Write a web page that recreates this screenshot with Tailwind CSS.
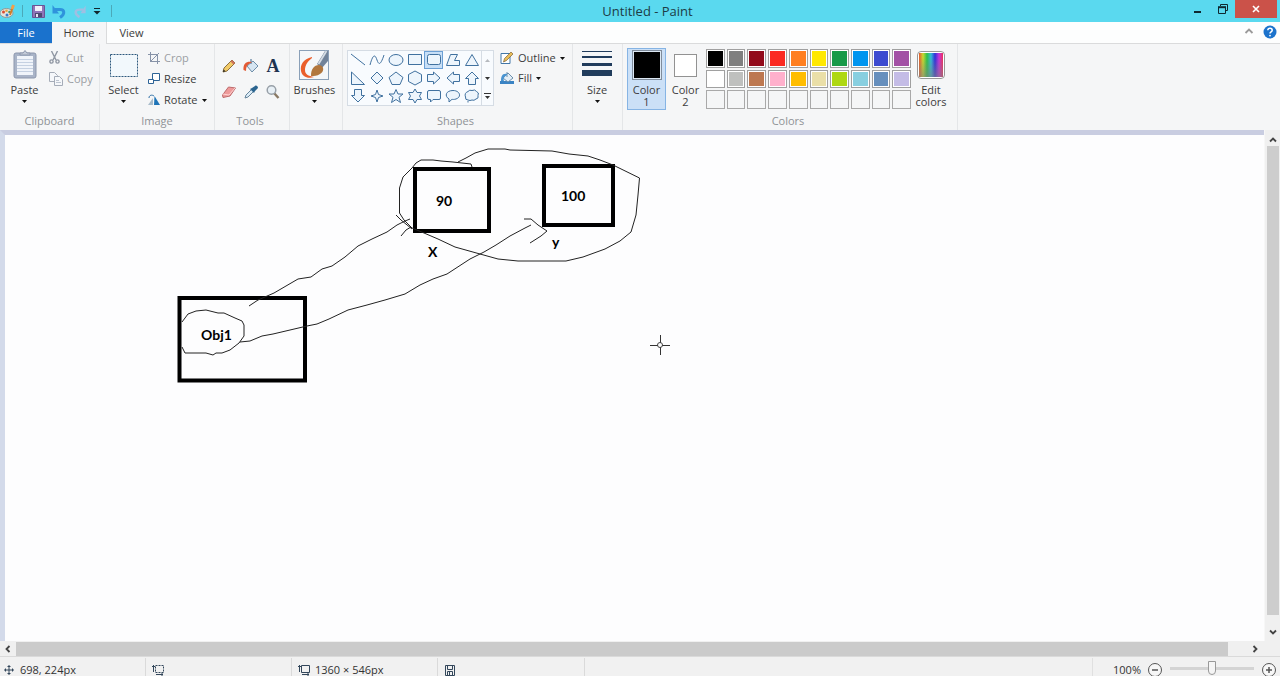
<!DOCTYPE html>
<html lang="en">
<head>
<meta charset="utf-8">
<title>Untitled - Paint</title>
<script src="https://cdn.jsdelivr.net/npm/@tailwindcss/browser@4"></script>
</head>
<body class="h-screen flex flex-col overflow-hidden bg-[#f5f6f7] font-['Open_Sans','Noto_Sans',sans-serif] text-[11px] leading-3 text-[#3c3c3c]">

<header class="h-[22px] shrink-0 flex items-start bg-[#5ad9ef] text-[#1d3c46]">
  <div class="w-32 h-full flex items-center">
    <svg class="w-4 h-4" viewBox="0 0 16 16" aria-hidden="true"><ellipse cx="6.500" cy="10" rx="6.500" ry="4.500" fill="#e3e4dd" stroke="#8d9a98"/><circle cx="3.500" cy="9" r="1.500" fill="#d94b32"/><circle cx="6.500" cy="7.800" r="1.300" fill="#e9a33c"/><circle cx="9.500" cy="9" r="1.300" fill="#3c9b72"/><circle cx="7" cy="12" r="1.500" fill="#3676c9"/><path d="m10 12 2.500-7" stroke="#d27c28" stroke-width="2"/><path d="m12 6 1.500-4" stroke="#f2a04a" stroke-width="3"/></svg>
    <span class="w-px h-3 ml-1.5 bg-[#4ba9b9]"></span>
    <button aria-label="Save" class="ml-2"><svg class="w-[15px] h-[15px]" viewBox="0 0 15 15"><path d="M1.500 1.500h12v12h-12z" fill="#8f74b8" stroke="#6a5595"/><path d="M4 2h7v5H4z" fill="#f2f0fa"/><path d="M4 9h7v4H4z" fill="#4d4a72"/><path d="M5 10h2v3H5z" fill="#e5e3f0"/></svg></button>
    <button aria-label="Undo" class="ml-1.5"><svg class="w-[15px] h-[15px]" viewBox="0 0 15 15"><path d="M3 5.500h5c4.500 0 5.500 4.500 0 8" fill="none" stroke="#2f93dc" stroke-width="3"/><path d="M.5 1v8.500H7z" fill="#2f93dc"/></svg></button>
    <button aria-label="Redo" class="ml-1.5"><svg class="w-[14px] h-[15px]" viewBox="0 0 15 15"><path d="M11 5.500H7c-5 0-6 4.500 0 8" fill="none" stroke="#9fbfe2" stroke-width="2.600"/><path d="M13.500 1v8.500H8z" fill="#9fbfe2"/></svg></button>
    <button aria-label="Customize Quick Access Toolbar" class="ml-1.5"><svg class="w-2 h-2" viewBox="0 0 8 8"><path d="M1 1.500h6" stroke="#10262d"/><path d="M.500 4h7L4 7.500z" fill="#10262d"/></svg></button>
    <span class="w-px h-3 ml-2.5 bg-[#4ba9b9]"></span>
  </div>
  <h1 class="flex-1 self-center text-center text-[13px] leading-4 pr-5">Untitled - Paint</h1>
  <div class="flex items-start">
    <button aria-label="Minimize" class="w-6 h-[18px] grid place-items-center"><svg class="w-3 h-3" viewBox="0 0 12 12"><path d="M1 9h7" stroke="#0e2830" stroke-width="2"/></svg></button>
    <button aria-label="Restore" class="w-6 h-[18px] grid place-items-center"><svg class="w-3 h-3" viewBox="0 0 12 12" fill="none" stroke="#0e2830"><path d="M3.500 3V1.500h7v6H9"/><path d="M1.500 4v6.500h7V4"/><path d="M1 4.200h8" stroke-width="2"/></svg></button>
    <button aria-label="Close" class="w-[42px] h-[18px] mr-[3px] grid place-items-center bg-[#cb5249]"><svg class="w-3 h-3" viewBox="0 0 12 12"><path d="m3 3 6 6m0-6L3 9" stroke="#fff" stroke-width="1.600"/></svg></button>
  </div>
</header>

<nav class="h-[22px] shrink-0 flex items-stretch bg-[#fdfefe] border-b border-[#dadbdc]" aria-label="Ribbon tabs">
  <button class="w-[52px] bg-[#1a72cd] text-white">File</button>
  <button class="w-[55px] -mb-px bg-[#f5f6f7] border-r border-[#dadbdc]">Home</button>
  <button class="w-[49px]">View</button>
  <span class="flex-1"></span>
  <button aria-label="Minimize the Ribbon" class="mr-2 -mt-1"><svg class="w-3 h-3" viewBox="0 0 12 12"><path d="m2.500 8 3.500-3.500L9.500 8" fill="none" stroke="#9a9a9a" stroke-width="1.800"/></svg></button>
  <button aria-label="Help" class="mr-[3px] -mt-px"><svg class="w-[14px] h-[14px]" viewBox="0 0 14 14"><circle cx="7" cy="7" r="6.500" fill="#1c73cc"/><path d="M4.800 5.200c.2-2.600 4.400-2.400 4.400 0C9.200 6.800 7 6.800 7 8.500" fill="none" stroke="#fff" stroke-width="1.500"/><circle cx="7" cy="10.600" r=".9" fill="#fff"/></svg></button>
</nav>

<section class="h-[86px] shrink-0 flex bg-[#f5f6f7]" aria-label="Home ribbon">
  <div class="w-[100px] flex flex-col justify-between border-r border-[#e4e6e8] pb-[3px]">
    <div class="flex pt-[6px]">
      <button class="w-[49px] flex flex-col items-center">
        <svg class="w-6 h-[30px]" viewBox="0 0 24 30"><rect x="1" y="3" width="22" height="25" rx="2" fill="#a9b4c8" stroke="#8c97ad"/><path d="M4 6h16v19H4z" fill="#f0f4fa"/><path d="M4 9.500h16M4 12.500h16M4 15.500h16M4 18.500h16M4 21.500h16" stroke="#c5d1e2"/><path d="M7 5V3h3l2-2.500L14 3h3v2z" fill="#c2c9d6" stroke="#8c97ad"/></svg>
        <span class="mt-[4px]">Paste</span>
        <svg class="w-[5px] h-[3px] mt-1" viewBox="0 0 5 3"><path d="M0 0h5L2.500 3z" fill="#111"/></svg>
      </button>
      <div class="flex flex-col gap-2 pt-px text-[#9b9ea3]">
        <button class="flex items-center gap-1.5"><svg class="w-[11px] h-[13px]" viewBox="0 0 11 13" fill="none" stroke="#9097a3" stroke-width="1.400"><path d="M2.500 0 7 9M8.500 0 4 9"/><circle cx="2.500" cy="10.500" r="1.600"/><circle cx="8.500" cy="10.500" r="1.600"/></svg>Cut</button>
        <button class="flex items-center gap-1"><svg class="w-[14px] h-[14px]" viewBox="0 0 14 14" fill="#f5f7fa" stroke="#a5acb8"><path d="M.5.500h5l3 3v6h-8z"/><path d="M5.500 4.500h5l3 3v6h-8z"/><path d="M7 8.500h3M7 10.500h5" stroke="#bcc4d0"/></svg>Copy</button>
      </div>
    </div>
    <span class="text-center text-[#8f9296]">Clipboard</span>
  </div>

  <div class="w-[115px] flex flex-col justify-between border-r border-[#e4e6e8] pb-[3px]">
    <div class="flex pt-[6px]">
      <button class="w-[47px] flex flex-col items-center">
        <svg class="w-[30px] h-[30px]" viewBox="0 0 30 30"><rect x="1.500" y="4.500" width="27" height="22" fill="#f2f8fc" stroke="#2d587d" stroke-dasharray="2 1"/></svg>
        <span class="mt-[4px]">Select</span>
        <svg class="w-[5px] h-[3px] mt-1" viewBox="0 0 5 3"><path d="M0 0h5L2.500 3z" fill="#111"/></svg>
      </button>
      <div class="flex flex-col gap-[9px] pt-[2px] pl-px">
        <button class="flex items-center gap-1 text-[#9b9ea3]"><svg class="w-3 h-3" viewBox="0 0 12 12" fill="none" stroke="#8793a8"><path d="M2.500 0v9.500H12M0 2.500h9.500V12M2 10l9-9"/></svg>Crop</button>
        <button class="flex items-center gap-1"><svg class="w-3 h-3" viewBox="0 0 12 12" fill="#fff" stroke="#2d6396"><path d="M4.500.500h7v7h-7z"/><path d="M.5 6.500h5v4h-5z"/></svg>Resize</button>
        <button class="flex items-center gap-1"><svg class="w-3 h-3" viewBox="0 0 12 12"><path d="M0 11h5V4z" fill="#a9bccb"/><path d="M6 11h6L6.500 2z" fill="#1f74b7"/><path d="M1 4c0-3 3-3.500 5-2" fill="none" stroke="#2d6ea5"/></svg>Rotate<svg class="w-[5px] h-[3px]" viewBox="0 0 5 3"><path d="M0 0h5L2.500 3z" fill="#111"/></svg></button>
      </div>
    </div>
    <span class="text-center text-[#8f9296]">Image</span>
  </div>

  <div class="w-[75px] flex flex-col justify-between border-r border-[#e4e6e8] pb-[3px]">
    <div class="grid grid-cols-[16px_16px_16px] gap-x-1.5 gap-y-2.5 pt-[14px] pl-1.5">
      <button aria-label="Pencil"><svg class="w-4 h-4" viewBox="0 0 16 16"><path d="m2 14 1-4 8-8 3 3-8 8z" fill="#f2cb68" stroke="#8b7040"/><path d="m11 2 3 3-1.500 1.500-3-3z" fill="#cf725c"/><path d="m2 14 .7-2.500 1.800 1.800z" fill="#222"/></svg></button>
      <button aria-label="Fill with color"><svg class="w-4 h-4" viewBox="0 0 16 16"><path d="m4 8 6-5 5 5-6 6z" fill="#d6e5f1" stroke="#6d8da8"/><path d="M8 6V1" stroke="#6d8da8" stroke-width="1.400"/><path d="M9 4C4 3 0 5 .500 12l2.500 1C3 9 4 7 6 6z" fill="#e35a34"/></svg></button>
      <button aria-label="Text" class="h-4 grid place-items-center font-['Liberation_Serif',serif] font-bold text-[18px] leading-4 text-[#1e3351]">A</button>
      <button aria-label="Eraser"><svg class="w-4 h-4" viewBox="0 0 16 16"><path d="m1.500 11 6-8 7 1-5.500 8-7 1.500z" fill="#ee9a9a" stroke="#bd6a6c"/><path d="m1.500 10 6.500 1 6-7" fill="none" stroke="#ffd3d3"/></svg></button>
      <button aria-label="Color picker"><svg class="w-4 h-4" viewBox="0 0 16 16"><path d="m2 14 1-3 6-6 2 2-6 6z" fill="#dcecf7" stroke="#65849c"/><path d="m7 5 4 4 1-2 3-3c0-2-2-3-3-2L9 4z" fill="#2a648f"/></svg></button>
      <button aria-label="Magnifier"><svg class="w-4 h-4" viewBox="0 0 16 16"><path d="m9 9 4.500 5" stroke="#8a7964" stroke-width="2.400"/><circle cx="6.500" cy="6" r="4.300" fill="#e8f0f6" stroke="#98a0a8" stroke-width="1.500"/></svg></button>
    </div>
    <span class="text-center text-[#8f9296] pr-1">Tools</span>
  </div>

  <div class="w-[53px] border-r border-[#e4e6e8] pt-[6px] pr-[3px] flex flex-col items-center">
    <button class="flex flex-col items-center">
      <svg class="w-[30px] h-[30px]" viewBox="0 0 30 30"><rect x=".5" y=".5" width="29" height="29" fill="#f4f7fa" stroke="#8aa0b8"/><path d="M29 1h-3l-8 13 5 4 6-7z" fill="#71839a"/><path d="m19.500 14 8-13" stroke="#d5dde5" stroke-width="1.800"/><path d="M13 7C4 9 1 15 2 21c1 6 7 8 13 6-6-1-9-3-9-7 0-5 3-9 7-12z" fill="#ea5e2b"/><path d="M12 26c0-7 3-11 8-11 6 1 5 7 1 9-3 2-6 2-9 2z" fill="#b1773e"/></svg>
      <span class="mt-[4px]">Brushes</span>
      <svg class="w-[5px] h-[3px] mt-1" viewBox="0 0 5 3"><path d="M0 0h5L2.500 3z" fill="#111"/></svg>
    </button>
  </div>

  <div class="w-[230px] flex flex-col justify-between border-r border-[#e4e6e8] pb-[3px]">
    <div class="flex pl-1 pt-[6px]">
      <div class="flex border border-[#d5dce4] bg-[#f8fbfe]">
        <div class="grid grid-cols-[19px_19px_19px_19px_19px_19px_19px] grid-rows-[18px_18px_18px] fill-[#edf5fc] stroke-[#40719f]">
          <button aria-label="Line" class="grid place-items-center"><svg class="w-4 h-4" viewBox="0 0 16 16"><path d="m1 2 14 11"/></svg></button>
          <button aria-label="Curve" class="grid place-items-center"><svg class="w-4 h-4" viewBox="0 0 16 16"><path d="M1 13C4 2 6 2 8 8s4 4 7-5" fill="none"/></svg></button>
          <button aria-label="Oval" class="grid place-items-center"><svg class="w-4 h-4" viewBox="0 0 16 16"><ellipse cx="8" cy="8" rx="7" ry="5.500"/></svg></button>
          <button aria-label="Rectangle" class="grid place-items-center"><svg class="w-4 h-4" viewBox="0 0 16 16"><path d="M1.500 2.500h13v10h-13z"/></svg></button>
          <button aria-label="Rounded rectangle" aria-pressed="true" class="grid place-items-center bg-[#c7dff7] outline outline-[#6b9fd4] -outline-offset-1"><svg class="w-4 h-4" viewBox="0 0 16 16"><rect x="1.500" y="2.500" width="13" height="10" rx="2"/></svg></button>
          <button aria-label="Polygon" class="grid place-items-center"><svg class="w-4 h-4" viewBox="0 0 16 16"><path d="m1.500 13.500 4-11h7l-3 6h5v5z"/></svg></button>
          <button aria-label="Triangle" class="grid place-items-center"><svg class="w-4 h-4" viewBox="0 0 16 16"><path d="m8 2.500 6.500 11h-13z"/></svg></button>

          <button aria-label="Right triangle" class="grid place-items-center"><svg class="w-4 h-4" viewBox="0 0 16 16"><path d="M1.500 2v12.500h13z"/></svg></button>
          <button aria-label="Diamond" class="grid place-items-center"><svg class="w-4 h-4" viewBox="0 0 16 16"><path d="m8 2 6 6-6 6-6-6z"/></svg></button>
          <button aria-label="Pentagon" class="grid place-items-center"><svg class="w-4 h-4" viewBox="0 0 16 16"><path d="m8 2 7 5.500-3 7H4l-3-7z"/></svg></button>
          <button aria-label="Hexagon" class="grid place-items-center"><svg class="w-4 h-4" viewBox="0 0 16 16"><path d="m8 1 6.500 3.500v7L8 15l-6.500-3.500v-7z"/></svg></button>
          <button aria-label="Right arrow" class="grid place-items-center"><svg class="w-4 h-4" viewBox="0 0 16 16"><path d="M1.500 4.500h6V2l6.500 6-6.500 6v-2.500h-6z"/></svg></button>
          <button aria-label="Left arrow" class="grid place-items-center"><svg class="w-4 h-4" viewBox="0 0 16 16"><path d="M14.500 4.500h-6V2L2 8l6.500 6v-2.500h6z"/></svg></button>
          <button aria-label="Up arrow" class="grid place-items-center"><svg class="w-4 h-4" viewBox="0 0 16 16"><path d="M4.500 14.500v-6h-3L8 2l6.500 6.500h-3v6z"/></svg></button>

          <button aria-label="Down arrow" class="grid place-items-center"><svg class="w-4 h-4" viewBox="0 0 16 16"><path d="M4.500 1.500v6h-3L8 14l6.500-6.500h-3v-6z"/></svg></button>
          <button aria-label="Four-point star" class="grid place-items-center"><svg class="w-4 h-4" viewBox="0 0 16 16"><path d="m8 2 1.500 4.500L14 8 9.500 9.500 8 14 6.500 9.500 2 8l4.500-1.500z"/></svg></button>
          <button aria-label="Five-point star" class="grid place-items-center"><svg class="w-4 h-4" viewBox="0 0 16 16"><path d="m8 1.500 2 4.500h5l-4 3.300 1.500 5.200L8 11.500l-4.500 3L5 9.300 1 6h5z"/></svg></button>
          <button aria-label="Six-point star" class="grid place-items-center"><svg class="w-4 h-4" viewBox="0 0 16 16"><path d="m8 1 2 3.500h4.500L12.500 8l2 3.500H10L8 15l-2-3.500H1.500l2-3.500-2-3.500H6z"/></svg></button>
          <button aria-label="Rounded rectangular callout" class="grid place-items-center"><svg class="w-4 h-4" viewBox="0 0 16 16"><path d="M3 2.500h10q1.500 0 1.500 1.500v6q0 1.500-1.500 1.500H7L4.500 14v-2.500H3Q1.500 11.500 1.500 10V4q0-1.500 1.500-1.500z"/></svg></button>
          <button aria-label="Oval callout" class="grid place-items-center"><svg class="w-4 h-4" viewBox="0 0 16 16"><path d="M4 11c-5-3-3-8.500 4-8.500s9 6.500 3 8.500c-2 .6-3 .5-4 .3L4 14z"/></svg></button>
          <button aria-label="Cloud callout" class="grid place-items-center"><svg class="w-4 h-4" viewBox="0 0 16 16"><path d="M4 3.500q1.500-2 4-1 3-1.500 4.500 1 3 1 1.500 4 1 3-2 3.500-2 2-4 1-2 1-4 0-3 0-2.500-3-1.500-4 2.500-5.500zM4 13v1.500"/></svg></button>
        </div>
        <div class="w-3 flex flex-col border-l border-[#d5dce4]">
          <button aria-label="Previous shapes" class="flex-1 grid place-items-center"><svg class="w-[5px] h-[3px]" viewBox="0 0 5 3"><path d="M0 3h5L2.500 0z" fill="#b5b9be"/></svg></button>
          <button aria-label="Next shapes" class="flex-1 grid place-items-center"><svg class="w-[5px] h-[3px]" viewBox="0 0 5 3"><path d="M0 0h5L2.500 3z" fill="#333"/></svg></button>
          <button aria-label="All shapes" class="flex-1 grid place-items-center"><svg class="w-[7px] h-[6px]" viewBox="0 0 7 6"><path d="M0 .5h7" stroke="#333"/><path d="M1 3h5L3.500 6z" fill="#333"/></svg></button>
        </div>
      </div>
      <div class="flex flex-col gap-1.5 pl-1.5 pt-px">
        <button class="flex items-center gap-1"><svg class="w-[14px] h-[14px]" viewBox="0 0 14 14"><path d="M1 2.500h9v10H1z" fill="#fff" stroke="#4377a7"/><path d="m3.500 11 1-3.500 6.500-6.500 2 2-6.500 6.500z" fill="#e8bd58" stroke="#806133" stroke-width=".7"/></svg>Outline<svg class="w-[5px] h-[3px]" viewBox="0 0 5 3"><path d="M0 0h5L2.500 3z" fill="#111"/></svg></button>
        <button class="flex items-center gap-1"><svg class="w-[14px] h-[14px]" viewBox="0 0 14 14"><path d="M0 10h14v3H0z" fill="#3b84c4"/><path d="m3 7 5-5 5 5-5 4z" fill="#e4eef6" stroke="#6c8fac"/><path d="M7 6V1" stroke="#6c8fac"/><path d="M7 3C2 2 1 6 1 10h3c-1-3 0-4 3-6z" fill="#4a94d0"/></svg>Fill<svg class="w-[5px] h-[3px]" viewBox="0 0 5 3"><path d="M0 0h5L2.500 3z" fill="#111"/></svg></button>
      </div>
    </div>
    <span class="text-center text-[#8f9296] pr-1">Shapes</span>
  </div>

  <div class="w-[50px] border-r border-[#e4e6e8] pt-[6px] pr-px flex flex-col items-center">
    <button class="flex flex-col items-center">
      <svg class="w-[30px] h-[30px]" viewBox="0 0 30 30" fill="#213c5c"><path d="M0 1h30v1H0zM0 6h30v2H0zM0 13h30v3H0zM0 20h30v6H0z"/></svg>
      <span class="mt-[4px]">Size</span>
      <svg class="w-[5px] h-[3px] mt-1" viewBox="0 0 5 3"><path d="M0 0h5L2.500 3z" fill="#111"/></svg>
    </button>
  </div>

  <div class="w-[335px] flex flex-col justify-between border-r border-[#e4e6e8] pb-[3px]">
    <div class="flex pl-1 pt-1">
      <button aria-pressed="true" class="w-[39px] h-[62px] flex flex-col items-center border border-[#86b4e4] bg-[#cbe0f7] pt-px">
        <span class="w-[30px] h-[30px] border border-[#7f8c9b] bg-black outline outline-[#dce8f4] -outline-offset-2"></span>
        <span class="mt-[4px]">Color<br>1</span>
      </button>
      <button class="w-[39px] h-[62px] flex flex-col items-center pt-[2px]">
        <span class="h-[30px] flex items-center"><span class="w-[23px] h-[23px] border border-[#929292] bg-white"></span></span>
        <span class="mt-[4px]">Color<br>2</span>
      </button>
      <div class="w-[205px] h-[60px] mt-px ml-px grid grid-cols-10 grid-rows-3 gap-[2px]">
        <button aria-label="Black" class="border border-[#a0a0a0] p-px bg-white"><span class="block h-full bg-[#000000]"></span></button>
        <button aria-label="Gray" class="border border-[#a0a0a0] p-px bg-white"><span class="block h-full bg-[#7f7f7f]"></span></button>
        <button aria-label="Dark red" class="border border-[#a0a0a0] p-px bg-white"><span class="block h-full bg-[#920b1b]"></span></button>
        <button aria-label="Red" class="border border-[#a0a0a0] p-px bg-white"><span class="block h-full bg-[#fb2a22]"></span></button>
        <button aria-label="Orange" class="border border-[#a0a0a0] p-px bg-white"><span class="block h-full bg-[#ff7f20]"></span></button>
        <button aria-label="Yellow" class="border border-[#a0a0a0] p-px bg-white"><span class="block h-full bg-[#ffe800]"></span></button>
        <button aria-label="Green" class="border border-[#a0a0a0] p-px bg-white"><span class="block h-full bg-[#179a48]"></span></button>
        <button aria-label="Turquoise" class="border border-[#a0a0a0] p-px bg-white"><span class="block h-full bg-[#0095ef]"></span></button>
        <button aria-label="Indigo" class="border border-[#a0a0a0] p-px bg-white"><span class="block h-full bg-[#3c4bd0]"></span></button>
        <button aria-label="Purple" class="border border-[#a0a0a0] p-px bg-white"><span class="block h-full bg-[#a251a5]"></span></button>
        <button aria-label="White" class="border border-[#a0a0a0] p-px bg-white"><span class="block h-full bg-[#ffffff]"></span></button>
        <button aria-label="Light gray" class="border border-[#a0a0a0] p-px bg-white"><span class="block h-full bg-[#bfc0be]"></span></button>
        <button aria-label="Brown" class="border border-[#a0a0a0] p-px bg-white"><span class="block h-full bg-[#bd7850]"></span></button>
        <button aria-label="Rose" class="border border-[#a0a0a0] p-px bg-white"><span class="block h-full bg-[#ffb0cc]"></span></button>
        <button aria-label="Gold" class="border border-[#a0a0a0] p-px bg-white"><span class="block h-full bg-[#ffbd00]"></span></button>
        <button aria-label="Light yellow" class="border border-[#a0a0a0] p-px bg-white"><span class="block h-full bg-[#eadfa8]"></span></button>
        <button aria-label="Lime" class="border border-[#a0a0a0] p-px bg-white"><span class="block h-full bg-[#aed812]"></span></button>
        <button aria-label="Light turquoise" class="border border-[#a0a0a0] p-px bg-white"><span class="block h-full bg-[#88cfe0]"></span></button>
        <button aria-label="Blue-gray" class="border border-[#a0a0a0] p-px bg-white"><span class="block h-full bg-[#668fbd]"></span></button>
        <button aria-label="Lavender" class="border border-[#a0a0a0] p-px bg-white"><span class="block h-full bg-[#c4bce6]"></span></button>
        <button aria-label="Custom color 1" class="border border-[#a9a9a9]"></button>
        <button aria-label="Custom color 2" class="border border-[#a9a9a9]"></button>
        <button aria-label="Custom color 3" class="border border-[#a9a9a9]"></button>
        <button aria-label="Custom color 4" class="border border-[#a9a9a9]"></button>
        <button aria-label="Custom color 5" class="border border-[#a9a9a9]"></button>
        <button aria-label="Custom color 6" class="border border-[#a9a9a9]"></button>
        <button aria-label="Custom color 7" class="border border-[#a9a9a9]"></button>
        <button aria-label="Custom color 8" class="border border-[#a9a9a9]"></button>
        <button aria-label="Custom color 9" class="border border-[#a9a9a9]"></button>
        <button aria-label="Custom color 10" class="border border-[#a9a9a9]"></button>
      </div>
      <button class="w-10 h-[62px] flex flex-col items-center pt-[3px]">
        <span class="w-7 h-7 mb-px border border-[#979797] rounded-sm p-px bg-white"><span class="block h-full bg-[linear-gradient(to_bottom,transparent_20%,#80808099),linear-gradient(to_right,#e4572e,#c8d92f,#2dc04b,#35b8d8,#3131d8,#c234dc,#ee3158)]"></span></span>
        <span class="mt-[4px]">Edit<br>colors</span>
      </button>
    </div>
    <span class="text-center text-[#8f9296] pr-1">Colors</span>
  </div>
</section>

<main class="flex-1 min-h-0 grid grid-cols-[1fr_16px] grid-rows-[1fr_15px] bg-[#f0f0f0]">
  <div class="min-w-0 min-h-0 border-t-[5px] border-l-[5px] border-t-[#c9cde1] border-l-[#d3daea] bg-[#fdfdfe]">
    <svg class="block w-full h-full" role="img" aria-label="Drawing canvas">
      <g transform="translate(-5 -135)" fill="none" stroke="#000">
        <g stroke-width="4">
          <path d="M415 169h74v62h-74z"/><path d="M544 166h69v59h-69z"/><path d="M179.500 298h125.500v82.500h-125.500z"/>
        </g>
        <g stroke="#222">
          <path d="M472 167 471 164 453 162 441 161 433 160 421 160 416 163 412 168 403 177 399.500 188 399.500 213 404 220 412 228 424 233 438 239 455 247 480 254 498 259 518 261 566 261 583 257 605 249 620 241 631 232 636 215 638 195 639.500 178 613 165 600 160 588 156 569 154 552 151 510 150 505 149 488 149 475 153 466 158 458 162"/>
          <path d="M396 215 401 220 412 229M401 236 406 230 411 227"/>
          <path d="M249 306 258 300 274 293 298 279 311 277 322 269 332 266 345 257 358 246 372 239 387 232 397 225 405 221 410 219"/>
          <path d="M240 342 250 341 262 336 273 334 290 330 307 326 317 324 329 319 348 310 367 305 385 300 405 294 420 285 433 279 447 274 470 259 484 252 496 245 510 236 525 228 531 225"/>
          <path d="M524 219 531 219 538 225 547 231 541 236 530 243"/>
          <path d="M182 322 188 314 196 311 206 310 218 313 224 313 235 318 242 321 244 325 244 336 239 343 230 350 222 353 216 353 213 355 206 353 185 353 182 347"/>
        </g>
        <g fill="#000" stroke="none" class="font-['Lato','Open_Sans',sans-serif] font-bold text-[14px]">
          <text x="436" y="206">90</text><text x="561" y="201">100</text><text x="428" y="257">X</text><text x="552" y="247">y</text><text x="201" y="340">Obj1</text>
        </g>
        <path d="M650 345.500h8m4 0h8M660.500 335v8m0 4v8" stroke="#333"/><circle cx="660" cy="345" r="2.500" stroke="#444"/>
      </g>
    </svg>
  </div>
  <div class="flex flex-col items-center border-l border-[#f7f7f7] pt-[3px]">
    <button aria-label="Scroll up" class="h-[13px]"><svg class="w-3 h-3" viewBox="0 0 12 12"><path d="m3 7.500 3-3 3 3" fill="none" stroke="#444" stroke-width="1.800"/></svg></button>
    <span class="w-3 flex-1 bg-[#cdcdcd]"></span>
    <button aria-label="Scroll down" class="h-[26px] pt-2"><svg class="w-3 h-3" viewBox="0 0 12 12"><path d="m3 4.500 3 3 3-3" fill="none" stroke="#444" stroke-width="1.800"/></svg></button>
  </div>
  <div class="flex items-center">
    <button aria-label="Scroll left" class="w-4 grid place-items-center"><svg class="w-3 h-3" viewBox="0 0 12 12"><path d="m7.500 3-3 3 3 3" fill="none" stroke="#444" stroke-width="1.800"/></svg></button>
    <span class="h-[14px] flex-1 bg-[#cbcbcb]"></span>
    <button aria-label="Scroll right" class="w-9 pl-[6px] grid place-items-center"><svg class="w-3 h-3 ml-3" viewBox="0 0 12 12"><path d="m4.500 3 3 3-3 3" fill="none" stroke="#444" stroke-width="1.800"/></svg></button>
  </div>
  <div></div>
</main>

<footer class="h-5 shrink-0 flex items-stretch border-t border-[#dadada] bg-[#f1f1f1] pt-px text-[#333] leading-6">
  <div class="w-[146px] flex items-center gap-1.5 pl-1 pt-[6px] border-r border-[#dadada]">
    <svg class="w-[10px] h-[10px]" viewBox="0 0 10 10" fill="none" stroke="#33475b"><path d="M5 0v10M0 5h10M3.500 1.500h3M3.500 8.500h3M1.500 3.500v3M8.500 3.500v3"/></svg>698, 224px
  </div>
  <div class="w-[146px] flex items-center pl-[6px] pt-[6px] border-r border-[#dadada]">
    <svg class="w-3 h-3" viewBox="0 0 12 12" fill="none" stroke="#33475b"><path d="M3.500 1.500h8v7h-8z" stroke-dasharray="2 1"/><path d="M1.500 1v7M0 2.500h3M4 10.500h7M10 9v3"/></svg>
  </div>
  <div class="w-[146px] flex items-center gap-[5px] pl-[6px] pt-[6px] border-r border-[#dadada]">
    <svg class="w-3 h-3" viewBox="0 0 12 12" fill="none" stroke="#33475b"><path d="M3.500 1.500h8v7h-8zM1.500 1v7M0 2.500h3M4 10.500h7M10 9v3"/></svg>1360 × 546px
  </div>
  <div class="w-[147px] flex items-center pl-[7px] pt-[6px] border-r border-[#dadada]">
    <svg class="w-[10px] h-[11px]" viewBox="0 0 10 11" fill="none" stroke="#33475b"><path d="M.5.500h9v10h-9zM2.500.500v4h5v-4M2.500 10.500v-4h5v4M4.500 7v3"/></svg>
  </div>
  <span class="flex-1"></span>
  <div class="flex items-center gap-[7px] pl-5 pr-1 pt-[6px] border-l border-[#e0e0e0]">
    <span>100%</span>
    <button aria-label="Zoom out"><svg class="block w-[14px] h-[14px]" viewBox="0 0 14 14" fill="#f7f7f7" stroke="#555"><circle cx="7" cy="7" r="6.500"/><path d="M4 7h6" stroke-width="1.500"/></svg></button>
    <input type="range" aria-label="Zoom" min="0" max="100" value="50" class="w-[84px] h-4 mx-px -mt-1 appearance-none bg-[linear-gradient(#d4d4d4,#d4d4d4)] bg-[length:100%_3px] bg-center bg-no-repeat [&::-webkit-slider-thumb]:appearance-none [&::-webkit-slider-thumb]:w-2 [&::-webkit-slider-thumb]:h-3.5 [&::-webkit-slider-thumb]:border [&::-webkit-slider-thumb]:border-[#999999] [&::-webkit-slider-thumb]:rounded-b [&::-webkit-slider-thumb]:bg-[#f5f5f5]">
    <button aria-label="Zoom in"><svg class="block w-[14px] h-[14px]" viewBox="0 0 14 14" fill="#f7f7f7" stroke="#555"><circle cx="7" cy="7" r="6.500"/><path d="M4 7h6M7 4v6" stroke-width="1.500"/></svg></button>
  </div>
</footer>
</body>
</html>
